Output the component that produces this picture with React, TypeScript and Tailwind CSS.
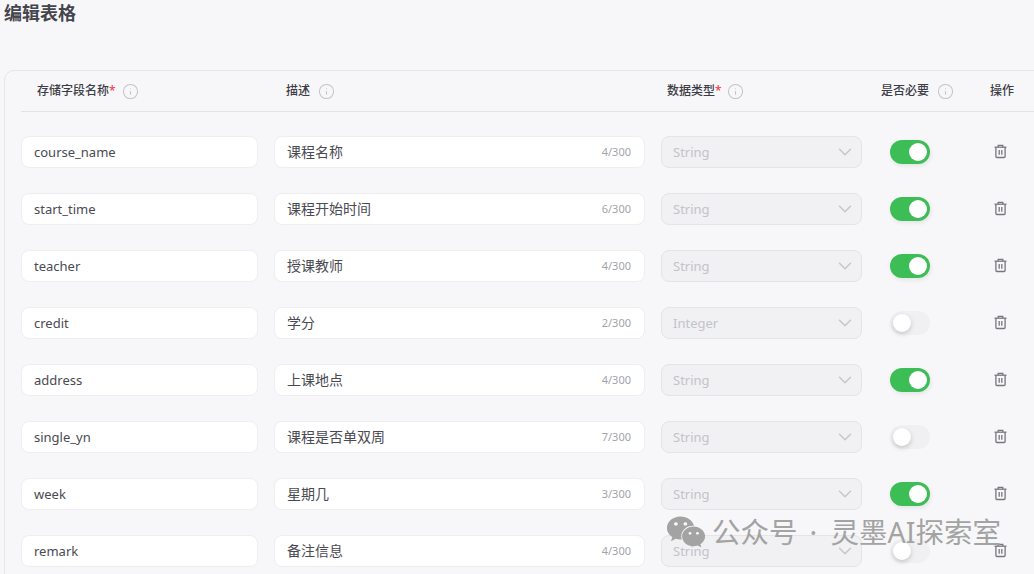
import {Info, ChevronDown} from "lucide-react";
import {FaWeixin} from "react-icons/fa";

const font = "font-['Noto_Sans','Noto_Sans_CJK_SC',sans-serif]";

type Field = {
  name: string;
  desc: string;
  type: string;
  required: boolean;
};

const fields: Field[] = [
  {name: "course_name", desc: "课程名称", type: "String", required: true},
  {name: "start_time", desc: "课程开始时间", type: "String", required: true},
  {name: "teacher", desc: "授课教师", type: "String", required: true},
  {name: "credit", desc: "学分", type: "Integer", required: false},
  {name: "address", desc: "上课地点", type: "String", required: true},
  {name: "single_yn", desc: "课程是否单双周", type: "String", required: false},
  {name: "week", desc: "星期几", type: "String", required: true},
  {name: "remark", desc: "备注信息", type: "String", required: false}
];

function HeaderLabel({label, required, hint, iconGap}: {label: string; required?: boolean; hint?: boolean; iconGap: string}) {
  return (
    <div className={`flex items-center text-[12px] font-medium text-[#3d3d45] ${iconGap}`}>
      <span>
        {label}
        {required ? <span className="text-[#f5414f]">*</span> : null}
      </span>
      {hint ? <Info size={17} strokeWidth={1.5} className="text-[#c4c4c8]" /> : null}
    </div>
  );
}

function TrashIcon() {
  return (
    <svg width="15" height="15" viewBox="0 0 15 15" fill="none" stroke="#77777d" strokeWidth="1.3">
      <path d="M1.5 3.2h12" />
      <path d="M5.2 3V1.4h4.6V3" />
      <path d="M2.9 3.2v9.3c0 .6.4 1 1 1h7.2c.6 0 1-.4 1-1V3.2" />
      <path d="M6.2 6v4.8M8.8 6v4.8" />
    </svg>
  );
}

function Row({field}: {field: Field}) {
  return (
    <div className="flex h-[32px] items-center">
      <div className="flex h-[32px] w-[237px] items-center rounded-[8px] border border-[#eeeef1] bg-white pl-[12px] text-[13px] text-[#4a4a52]">
        <span className="pt-[2px]">{field.name}</span>
      </div>
      <div className="ml-[16px] flex h-[32px] w-[371px] items-center justify-between rounded-[8px] border border-[#eeeef1] bg-white pl-[12px] pr-[13px] text-[14px] text-[#4a4a52]">
        <span className="pb-[2px]">{field.desc}</span>
        <span className="text-[11px] text-[#a3a3aa]">{field.desc.length}/300</span>
      </div>
      <div className="ml-[16px] flex h-[32px] w-[201px] items-center justify-between rounded-[8px] border border-[#e4e4e8] bg-[#f1f1f3] pl-[11px] pr-[5px] text-[13px] text-[#c3c3c8]">
        <span className="pt-[2px]">{field.type}</span>
        <ChevronDown size={22} strokeWidth={1.7} className="text-[#c8c8cc]" />
      </div>
      <div className="ml-[28px] w-[40px]">
        {field.required ? (
          <div className="flex h-[24px] w-[40px] items-center justify-end rounded-full bg-[#3dbd55] pr-[3px] shadow-[1px_2px_4px_rgba(0,0,0,0.08)]">
            <div className="h-[18px] w-[18px] rounded-full bg-white" />
          </div>
        ) : (
          <div className="flex h-[24px] w-[40px] items-center rounded-full bg-[#f0f0f2] pl-[3px]">
            <div className="h-[18px] w-[18px] rounded-full bg-white shadow-[0_2px_5px_rgba(0,0,0,0.18)]" />
          </div>
        )}
      </div>
      <div className="ml-[62px] flex w-[16px] -translate-y-[1px] justify-center">
        <TrashIcon />
      </div>
    </div>
  );
}

export default function App() {
  return (
    <div className={`relative h-[574px] w-[1034px] overflow-hidden bg-[#f7f7f9] ${font}`}>
      <h1 className="pl-[4px] pt-[1px] pb-[1px] text-[18px] font-bold leading-[24px] text-[#45454d]">编辑表格</h1>

      <div className="ml-[4px] mt-[44px] w-[1100px] rounded-tl-[10px] border border-[#e6e6ea] pb-[40px] pl-[16px]">
        <div className="flex h-[41px] items-center border-b border-[#e3e3e7]">
          <div className="w-[249px] pl-[16px]">
            <HeaderLabel label="存储字段名称" required hint iconGap="gap-[6px]" />
          </div>
          <div className="w-[381px] pl-[16px]">
            <HeaderLabel label="描述" hint iconGap="gap-[8px]" />
          </div>
          <div className="w-[230px] pl-[16px]">
            <HeaderLabel label="数据类型" required hint iconGap="gap-[5px]" />
          </div>
          <div className="w-[109px]">
            <HeaderLabel label="是否必要" hint iconGap="gap-[8px]" />
          </div>
          <HeaderLabel label="操作" iconGap="" />
        </div>

        <div className="flex flex-col gap-[25px] pt-[24px]">
          {fields.map((field) => (
            <Row key={field.name} field={field} />
          ))}
        </div>
      </div>

      {/* watermark */}
      <div className="absolute left-[666px] top-[514px] flex h-[36px] items-center text-[28.5px] leading-[36px] whitespace-nowrap text-[#a3a3a3]">
        <FaWeixin size={40} />
        <span className="ml-[6px]">公众号</span>
        <span className="ml-[12px] w-[21px]">·</span>
        <span>灵墨AI探索室</span>
      </div>
    </div>
  );
}
